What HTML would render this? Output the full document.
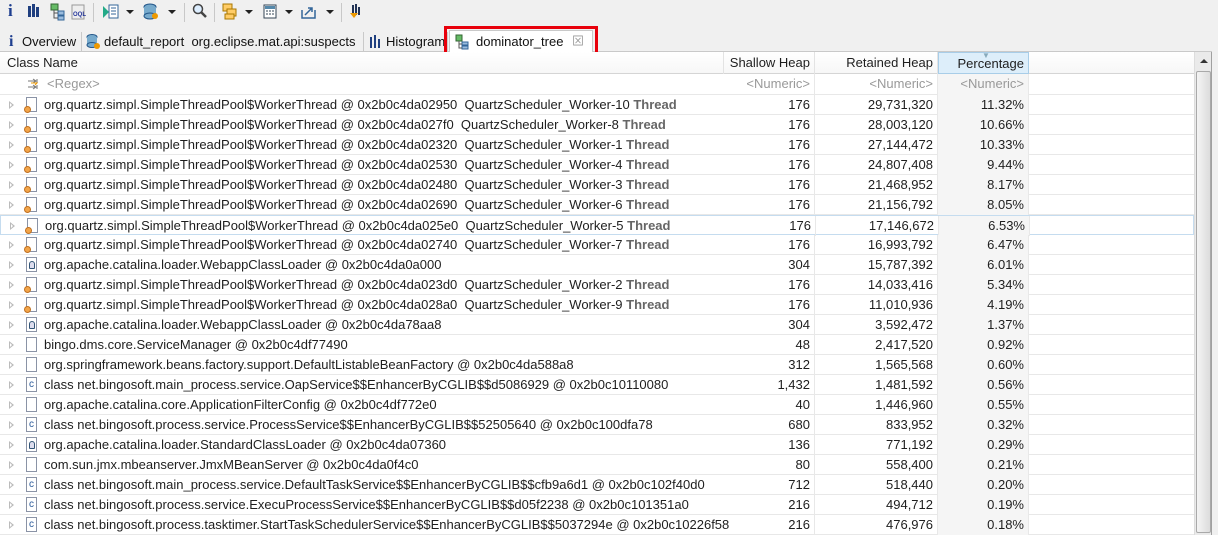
<!DOCTYPE html>
<html><head><meta charset="utf-8"><style>
*{margin:0;padding:0;box-sizing:border-box}
body{width:1218px;height:535px;overflow:hidden;background:#f0f0f0;font-family:"Liberation Sans","Noto Sans CJK SC",sans-serif;font-size:13px;color:#1e1e1e;position:relative}
.tb{position:absolute;top:0;left:0;height:30px;width:1218px}
.ic{position:absolute;top:3px}
.sep{position:absolute;top:3px;width:1px;height:19px;background:#c8c8c8}
.dd{position:absolute;top:10px;width:0;height:0;border-left:4px solid transparent;border-right:4px solid transparent;border-top:4px solid #222}
.tabs{position:absolute;top:30px;left:0;width:1212px;height:22px;border-bottom:1px solid #c9c9c9}
.tab{position:absolute;top:2px;height:20px;line-height:19px;padding-left:22px;border-right:1px solid #c9c9c9;color:#111}
.frame{position:absolute;top:52px;left:0;width:1212px;height:483px;background:#fff;border-right:1px solid #a0a0a0}
.hdr{position:absolute;top:0;left:0;width:1194px;height:22px;border-bottom:1px solid #d5d5d5;background:linear-gradient(#fff,#f7f7f7)}
.h{position:absolute;top:0;height:22px;line-height:22px;border-right:1px solid #e3e3e3}
.row{position:absolute;left:0;width:1194px;height:20px;border-bottom:1px solid #e8e8e8;line-height:19px;white-space:nowrap}
.c{position:absolute;top:0;height:20px;text-align:right;padding-right:4px;border-right:1px solid #e8e8e8}
.c1{left:724px;width:91px}.c2{left:815px;width:123px}.c3{left:938px;width:91px;background:#f5f5f5}
.nm{position:absolute;left:44px;top:0}
.tw{position:absolute;left:9px;top:6px;width:0;height:0;border-top:4px solid transparent;border-bottom:4px solid transparent;border-left:5px solid #bbb}
.tw:after{content:"";position:absolute;left:-4px;top:-2px;border-top:2px solid transparent;border-bottom:2px solid transparent;border-left:2px solid #fff}
.fi{position:absolute;left:26px;top:2px;width:11px;height:15px;border:1px solid #8a93a6;background:#fff}
.th{font-weight:bold;color:#666}
.gr{color:#999}
</style></head><body>
<div class="tb">
<span class="ic" style="left:8px;font-weight:bold;color:#1f3f8f;font-family:'Liberation Serif',serif;font-size:17px;top:1px">i</span>
<svg class="ic" style="left:27px" width="14" height="16"><rect x="1" y="3" width="3" height="11" fill="#1f3f7f"/><rect x="5" y="1" width="3" height="13" fill="#1f3f7f"/><rect x="9" y="4" width="3" height="10" fill="#1f3f7f"/></svg>
<svg class="ic" style="left:50px" width="16" height="18"><rect x="1" y="1" width="7" height="6" fill="#6b6" stroke="#363"/><rect x="8" y="8" width="6" height="4" fill="#9bd" stroke="#369"/><rect x="8" y="13" width="6" height="4" fill="#9bd" stroke="#369"/><path d="M4 7v8h4M4 10h4" stroke="#555" fill="none"/></svg>
<svg class="ic" style="left:70px" width="16" height="18"><rect x="2" y="2" width="12" height="14" fill="#eee" stroke="#999"/><text x="3" y="13" font-size="6" font-weight="bold" fill="#239">OQL</text></svg>
<div class="sep" style="left:93px"></div>
<svg class="ic" style="left:102px" width="18" height="18"><path d="M1 3l6 6-6 6z" fill="#2a8"/><rect x="7" y="2" width="9" height="13" fill="#fff" stroke="#369"/><path d="M9 5h5M9 8h5M9 11h5" stroke="#369"/></svg>
<div class="dd" style="left:126px"></div>
<svg class="ic" style="left:142px" width="18" height="18"><ellipse cx="8" cy="4" rx="6" ry="3" fill="#7ac" stroke="#258"/><rect x="2" y="4" width="12" height="9" fill="#7ac"/><ellipse cx="8" cy="13" rx="6" ry="3" fill="#7ac" stroke="#258"/><circle cx="13" cy="13" r="3" fill="#e90"/></svg>
<div class="dd" style="left:168px"></div>
<div class="sep" style="left:184px"></div>
<svg class="ic" style="left:192px" width="16" height="18"><circle cx="6" cy="6" r="4.5" fill="#def" stroke="#444" stroke-width="1.5"/><path d="M9 9l5 5" stroke="#444" stroke-width="2.5"/></svg>
<div class="sep" style="left:214px"></div>
<svg class="ic" style="left:222px" width="18" height="18"><rect x="1" y="1" width="9" height="7" fill="#fc6" stroke="#a70"/><rect x="5" y="6" width="9" height="7" fill="#fc6" stroke="#a70"/><rect x="3" y="11" width="9" height="5" fill="#fc6" stroke="#a70"/></svg>
<div class="dd" style="left:245px"></div>
<svg class="ic" style="left:262px" width="16" height="18"><rect x="2" y="2" width="12" height="13" fill="#fff" stroke="#345"/><rect x="3" y="3" width="10" height="3" fill="#58a"/><path d="M4 8h2M7 8h2M10 8h2M4 11h2M7 11h2M10 11h2" stroke="#345"/></svg>
<div class="dd" style="left:285px"></div>
<svg class="ic" style="left:300px" width="18" height="18"><path d="M2 7v8h13V7" fill="none" stroke="#369" stroke-width="1.5"/><path d="M5 12l7-7M8 5h4v4" stroke="#369" stroke-width="1.5" fill="none"/></svg>
<div class="dd" style="left:326px"></div>
<div class="sep" style="left:341px"></div>
<svg class="ic" style="left:348px" width="16" height="18"><rect x="4" y="2" width="2" height="10" fill="#235"/><rect x="7" y="1" width="2" height="11" fill="#235"/><rect x="10" y="4" width="2" height="8" fill="#235"/><path d="M2 10l4 5 4-5z" fill="#e90"/></svg>
</div>
<div class="tabs">
<div class="tab" style="left:0;width:82px"><span style="position:absolute;left:9px;font-weight:bold;color:#1f3f8f;font-family:'Liberation Serif',serif;font-size:16px">i</span>Overview</div>
<div class="tab" style="left:82px;width:282px"><svg style="position:absolute;left:3px;top:2px" width="16" height="16"><ellipse cx="7" cy="3" rx="5" ry="2.5" fill="#7ac" stroke="#258"/><rect x="2" y="3" width="10" height="8" fill="#7ac"/><ellipse cx="7" cy="11" rx="5" ry="2.5" fill="#7ac" stroke="#258"/><circle cx="12" cy="12" r="3" fill="#e90"/></svg>default_report&nbsp; org.eclipse.mat.api:suspects</div>
<div class="tab" style="left:364px;width:84px;overflow:hidden"><svg style="position:absolute;left:5px;top:3px" width="14" height="14"><rect x="1" y="2" width="2" height="11" fill="#1f3f7f"/><rect x="5" y="0" width="2" height="13" fill="#1f3f7f"/><rect x="9" y="4" width="2" height="9" fill="#1f3f7f"/></svg>Histogram</div>
<div class="tab" style="left:449px;top:0;height:23px;width:144px;background:#fff;border:1px solid #c9c9c9;border-bottom:none;line-height:21px;padding-left:26px"><svg style="position:absolute;left:5px;top:3px" width="16" height="17"><rect x="1" y="1" width="6" height="6" fill="#6b6" stroke="#363"/><rect x="7" y="8" width="6" height="3" fill="#9bd" stroke="#369"/><rect x="7" y="12" width="6" height="3" fill="#9bd" stroke="#369"/><path d="M4 7v7h3M4 10h3" stroke="#555" fill="none"/></svg>dominator_tree<span style="position:absolute;left:122px;top:0;color:#999;font-size:12px">⊠</span></div>
<div style="position:absolute;left:444px;top:-4px;width:154px;height:29px;border:3px solid #e8000b"></div>
</div>
<div class="frame">
<div class="hdr">
<div class="h" style="left:0;width:724px;padding-left:7px">Class Name</div>
<div class="h" style="left:724px;width:91px;text-align:right;padding-right:4px">Shallow Heap</div>
<div class="h" style="left:815px;width:123px;text-align:right;padding-right:4px">Retained Heap</div>
<div class="h" style="left:938px;width:91px;text-align:right;padding-right:4px;background:#ddeefa;border:1px solid #a8cde8">Percentage<span style="position:absolute;left:43px;top:-8px;font-size:8px;color:#8ab">▼</span></div>
</div>
<div class="row" style="top:22px;height:21px;color:#999">
<svg style="position:absolute;left:27px;top:4px" width="14" height="13"><path d="M1 3h8M6 1l3 2-3 2M1 9h8M6 7l3 2-3 2M10 1v4M10 7v4" stroke="#777" fill="none"/><path d="M4 5h6l-2 2" stroke="#e90" fill="none"/></svg>
<span class="nm" style="left:47px">&lt;Regex&gt;</span>
<div class="c c1" style="height:21px">&lt;Numeric&gt;</div><div class="c c2" style="height:21px">&lt;Numeric&gt;</div><div class="c c3" style="height:21px">&lt;Numeric&gt;</div></div>
<div id="rows"></div>
<div style="position:absolute;left:1194px;top:0;width:17px;height:483px;background:#eaeaea;border-left:1px solid #ddd">
<div style="position:absolute;left:5px;top:7px;border-left:4px solid transparent;border-right:4px solid transparent;border-bottom:4px solid #333"></div>
<div style="position:absolute;left:1px;top:19px;width:15px;height:462px;background:linear-gradient(90deg,#f4f4f4,#dcdcdc);border:1px solid #a9a9a9;border-radius:2px"></div>
</div>
</div>
<script>
var T="org.quartz.simpl.SimpleThreadPool$WorkerThread @ 0x2b0c4da0";
var d=[
["q",T+"2950&nbsp; QuartzScheduler_Worker-10","176","29,731,320","11.32%"],
["q",T+"27f0&nbsp; QuartzScheduler_Worker-8","176","28,003,120","10.66%"],
["q",T+"2320&nbsp; QuartzScheduler_Worker-1","176","27,144,472","10.33%"],
["q",T+"2530&nbsp; QuartzScheduler_Worker-4","176","24,807,408","9.44%"],
["q",T+"2480&nbsp; QuartzScheduler_Worker-3","176","21,468,952","8.17%"],
["q",T+"2690&nbsp; QuartzScheduler_Worker-6","176","21,156,792","8.05%"],
["q",T+"25e0&nbsp; QuartzScheduler_Worker-5","176","17,146,672","6.53%"],
["q",T+"2740&nbsp; QuartzScheduler_Worker-7","176","16,993,792","6.47%"],
["l","org.apache.catalina.loader.WebappClassLoader @ 0x2b0c4da0a000","304","15,787,392","6.01%"],
["q",T+"23d0&nbsp; QuartzScheduler_Worker-2","176","14,033,416","5.34%"],
["q",T+"28a0&nbsp; QuartzScheduler_Worker-9","176","11,010,936","4.19%"],
["l","org.apache.catalina.loader.WebappClassLoader @ 0x2b0c4da78aa8","304","3,592,472","1.37%"],
["f","bingo.dms.core.ServiceManager @ 0x2b0c4df77490","48","2,417,520","0.92%"],
["f","org.springframework.beans.factory.support.DefaultListableBeanFactory @ 0x2b0c4da588a8","312","1,565,568","0.60%"],
["c","class net.bingosoft.main_process.service.OapService$$EnhancerByCGLIB$$d5086929 @ 0x2b0c10110080","1,432","1,481,592","0.56%"],
["f","org.apache.catalina.core.ApplicationFilterConfig @ 0x2b0c4df772e0","40","1,446,960","0.55%"],
["c","class net.bingosoft.process.service.ProcessService$$EnhancerByCGLIB$$52505640 @ 0x2b0c100dfa78","680","833,952","0.32%"],
["l","org.apache.catalina.loader.StandardClassLoader @ 0x2b0c4da07360","136","771,192","0.29%"],
["f","com.sun.jmx.mbeanserver.JmxMBeanServer @ 0x2b0c4da0f4c0","80","558,400","0.21%"],
["c","class net.bingosoft.main_process.service.DefaultTaskService$$EnhancerByCGLIB$$cfb9a6d1 @ 0x2b0c102f40d0","712","518,440","0.20%"],
["c","class net.bingosoft.process.service.ExecuProcessService$$EnhancerByCGLIB$$d05f2238 @ 0x2b0c101351a0","216","494,712","0.19%"],
["c","class net.bingosoft.process.tasktimer.StartTaskSchedulerService$$EnhancerByCGLIB$$5037294e @ 0x2b0c10226f58","216","476,976","0.18%"]];
var h="";
d.forEach(function(r,i){
var top=43+i*20;
var st=i==6?"background:#fff;border:1px solid #c5dcef;":"";
var ic='<div class="fi"></div>';
if(r[0]=="q")ic+='<div style="position:absolute;left:24px;top:11px;width:7px;height:7px;border-radius:50%;background:#f2a54a;border:1px solid #c07020"></div>';
if(r[0]=="l")ic+='<div style="position:absolute;left:29px;top:6px;width:6px;height:8px;border:1px solid #357;border-radius:3px 3px 1px 1px;background:#dde"></div>';
if(r[0]=="c")ic+='<span style="position:absolute;left:29px;top:0;font-size:10px;color:#2a5a9a">c</span>';
h+='<div class="row" style="top:'+top+'px;'+st+'"><div class="tw"></div>'+ic+'<span class="nm">'+r[1]+(r[0]=="q"?' <span class="th">Thread</span>':'')+'</span><div class="c c1">'+r[2]+'</div><div class="c c2">'+r[3]+'</div><div class="c c3">'+r[4]+'</div></div>';
});
document.getElementById("rows").innerHTML=h;
</script>
</body></html>
